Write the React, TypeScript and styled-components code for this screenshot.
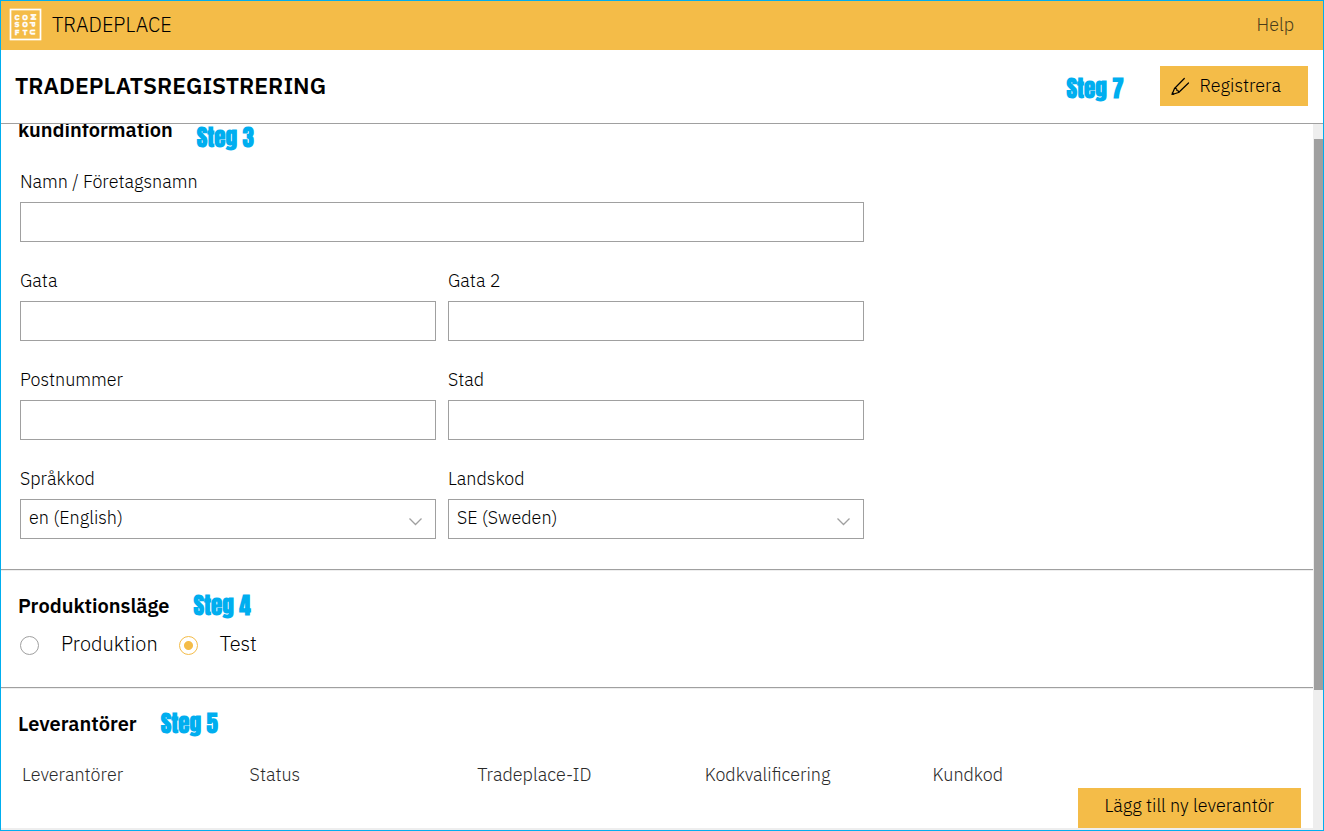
import React, { useId } from "react";
import styled, { createGlobalStyle } from "styled-components";

const amber = "#f4bc48";
const line = "#a0a0a0";
const cyan = "#00aeef";

const GlobalStyle = createGlobalStyle`
  *, *::before, *::after { box-sizing: border-box; }
  body {
    margin: 0;
    background: #fff;
    color: #000;
    font-family: "IBM Plex Sans", "Open Sans", sans-serif;
    font-size: 18px;
    font-weight: 300;
    line-height: 24px;
  }
  button, input, select { font: inherit; color: inherit; }
  h1, h2, fieldset { margin: 0; padding: 0; border: 0; }
`;

const Shell = styled.div`
  display: flex;
  flex-direction: column;
  height: 100vh;
  border: 1px solid ${cyan};
`;

const TopBar = styled.header`
  display: flex;
  align-items: center;
  justify-content: space-between;
  flex: none;
  height: 49px;
  padding: 0 29px 2px 8px;
  background: ${amber};
`;

const Brand = styled.div`
  display: flex;
  align-items: center;
  gap: 10px;
  font-size: 20px;
`;

const HelpLink = styled.a`
  color: #4a3c1c;
  text-decoration: none;
`;

const Step = styled.span`
  color: ${cyan};
  font-family: Impact, Anton, "Roboto Condensed", Roboto, sans-serif;
  font-size: 23px;
  font-weight: 700;
  line-height: 24px;
  white-space: nowrap;
`;

const TitleBar = styled.div`
  display: flex;
  align-items: center;
  flex: none;
  height: 74px;
  padding: 0 15px 1px 14px;
  border-bottom: 1px solid ${line};
  ${Step} { padding-top: 6px; }
`;

const PageTitle = styled.h1`
  flex: 1;
  padding-bottom: 2px;
  font-size: 23px;
  font-weight: 600;
`;

const AmberButton = styled.button`
  display: flex;
  align-items: center;
  justify-content: center;
  gap: 10px;
  height: 40px;
  padding: 0 27px 4px;
  border: 0;
  background: ${amber};
  cursor: pointer;
`;

const RegisterButton = styled(AmberButton)`
  margin-left: 36px;
  padding: 0 27px 1px 10px;
`;

const Body = styled.div`
  display: flex;
  flex: 1;
  min-height: 0;
  border-bottom: 2px solid #eee;
`;

const Content = styled.main`
  flex: 1;
  min-width: 0;
  overflow: hidden;
`;

const ScrollTrack = styled.div`
  flex: none;
  width: 10px;
  padding: 15px 0 0 1px;
  background: #eee;
`;

const ScrollThumb = styled.div`
  height: 80%;
  background: ${line};
`;

const Section = styled.section`
  padding: 24px 12px 0 17px;
  & + & {
    border-top: 1px solid ${line};
    box-shadow: inset 0 1px #eee;
  }
`;

const CustomerSection = styled(Section)`
  padding-top: 0;
  padding-bottom: 30px;
`;

const ModeSection = styled(Section)`
  padding-bottom: 31px;
`;

const HeadingRow = styled.div`
  display: flex;
  align-items: center;
  gap: 24px;
  min-height: 24px;
`;

/* Partly scrolled under the title bar. */
const CustomerHeading = styled(HeadingRow)`
  align-items: flex-start;
  height: 32px;
  margin-top: -6px;
  margin-bottom: 20px;
  ${Step} { align-self: flex-end; }
`;

const Heading = styled.h2`
  font-size: 20px;
  font-weight: 600;
  line-height: 24px;
`;

const Fields = styled.div`
  display: grid;
  grid-template-columns: 1fr 1fr;
  gap: 27px 12px;
  max-width: 846px;
  padding-left: 2px;
`;

const Field = styled.div<{ $wide?: boolean }>`
  display: flex;
  flex-direction: column;
  gap: 8px;
  grid-column: ${(p) => (p.$wide ? "1 / -1" : "auto")};
`;

const TextBox = styled.input`
  width: 100%;
  height: 40px;
  padding: 0 8px;
  border: 1px solid ${line};
  border-radius: 0;
  background: #fff;
`;

const SelectWrap = styled.div`
  display: grid;
  align-items: center;
  & > * { grid-area: 1 / 1; }
  & > svg { justify-self: end; margin: 4px 13px 0 0; pointer-events: none; }
`;

const SelectBox = styled.select`
  width: 100%;
  height: 40px;
  padding: 0 32px 2px 8px;
  border: 1px solid ${line};
  border-radius: 0;
  background: #fff;
  appearance: none;
`;

const Radios = styled.fieldset`
  display: flex;
  gap: 19px;
  margin-top: 14px;
`;

const RadioLabel = styled.label`
  display: flex;
  align-items: center;
  gap: 22px;
  padding-left: 2px;
  font-size: 20px;
`;

const Radio = styled.input`
  appearance: none;
  flex: none;
  width: 19px;
  height: 19px;
  margin: 2px 0 0;
  border: 1px solid ${line};
  border-radius: 50%;
  background: #fff;
  &:checked {
    border-color: ${amber};
    background: radial-gradient(circle, ${amber} 4px, #fff 5px);
  }
`;

const SupplierTable = styled.table`
  width: calc(100% - 145px);
  margin-top: 27px;
  margin-left: 4px;
  border-collapse: collapse;
  table-layout: fixed;
  color: #2a2a2a;
  th { padding: 0; font-weight: 300; text-align: left; }
`;

const Actions = styled.div`
  display: flex;
  justify-content: flex-end;
  padding-top: 1px;
`;

function Logo() {
  const cells: [string, number, number, number][] = [
    ["C", 8, 9, 0], ["O", 16, 9, 0], ["M", 24, 9, -90],
    ["S", 8, 16, 0], ["O", 16, 16, 0], ["P", 24, 16, 90],
    ["F", 8, 24, 0], ["T", 16, 24, 0], ["U", 24, 24, 90],
  ];
  return (
    <svg width="33" height="33" viewBox="0 0 33 33" aria-label="Compusoft">
      <rect x="1.500" y="1.500" width="30" height="30" fill="none" stroke="#fff" strokeWidth="1.700" />
      <g fill="#fff" stroke="#fff" strokeWidth="0.400" fontFamily="IBM Plex Sans, sans-serif" fontSize="8" fontWeight="700" textAnchor="middle">
        {cells.map(([letter, x, y, turn], i) => (
          <text key={i} transform={`translate(${x} ${y}) rotate(${turn})`} y="3">{letter}</text>
        ))}
      </g>
    </svg>
  );
}

function PencilIcon() {
  return (
    <svg width="20" height="20" viewBox="0 0 20 20" fill="none" stroke="#000" strokeWidth="1.200" strokeLinecap="round" strokeLinejoin="round">
      <path d="M14.300 2.500 4.500 12.500 2 18.500l6.600-2L18.500 7" />
      <path d="M4.500 12.500c2-.2 2.600.6 2.400 2 1.300 0 1.900.7 1.700 2" />
      <path d="M2.300 17l1.400 1.200" />
    </svg>
  );
}

function Chevron() {
  return (
    <svg width="15" height="9" viewBox="0 0 15 9" fill="none" stroke={line} strokeWidth="1.300">
      <path d="M1.500 1.500 7.500 7.500 13.500 1.500" />
    </svg>
  );
}

function TextField({ label, wide }: { label: string; wide?: boolean }) {
  const id = useId();
  return (
    <Field $wide={wide}>
      <label htmlFor={id}>{label}</label>
      <TextBox id={id} type="text" />
    </Field>
  );
}

function SelectField({ label, value }: { label: string; value: string }) {
  const id = useId();
  return (
    <Field>
      <label htmlFor={id}>{label}</label>
      <SelectWrap>
        <SelectBox id={id}><option>{value}</option></SelectBox>
        <Chevron />
      </SelectWrap>
    </Field>
  );
}

const columns = ["Leverantörer", "Status", "Tradeplace-ID", "Kodkvalificering", "Kundkod"];

export default function App() {
  return (
    <Shell>
      <GlobalStyle />
      <TopBar>
        <Brand><Logo />TRADEPLACE</Brand>
        <HelpLink href="#help">Help</HelpLink>
      </TopBar>
      <TitleBar>
        <PageTitle>TRADEPLATSREGISTRERING</PageTitle>
        <Step>Steg 7</Step>
        <RegisterButton type="button"><PencilIcon />Registrera</RegisterButton>
      </TitleBar>
      <Body>
        <Content>
          <CustomerSection>
            <CustomerHeading>
              <Heading>kundinformation</Heading>
              <Step>Steg 3</Step>
            </CustomerHeading>
            <Fields>
              <TextField label="Namn / Företagsnamn" wide />
              <TextField label="Gata" />
              <TextField label="Gata 2" />
              <TextField label="Postnummer" />
              <TextField label="Stad" />
              <SelectField label="Språkkod" value="en (English)" />
              <SelectField label="Landskod" value="SE (Sweden)" />
            </Fields>
          </CustomerSection>
          <ModeSection>
            <HeadingRow>
              <Heading>Produktionsläge</Heading>
              <Step>Steg 4</Step>
            </HeadingRow>
            <Radios aria-label="Produktionsläge">
              <RadioLabel><Radio type="radio" name="mode" />Produktion</RadioLabel>
              <RadioLabel><Radio type="radio" name="mode" defaultChecked />Test</RadioLabel>
            </Radios>
          </ModeSection>
          <Section>
            <HeadingRow>
              <Heading>Leverantörer</Heading>
              <Step>Steg 5</Step>
            </HeadingRow>
            <SupplierTable>
              <thead>
                <tr>{columns.map((c) => <th key={c} scope="col">{c}</th>)}</tr>
              </thead>
            </SupplierTable>
            <Actions>
              <AmberButton type="button">Lägg till ny leverantör</AmberButton>
            </Actions>
          </Section>
        </Content>
        <ScrollTrack><ScrollThumb /></ScrollTrack>
      </Body>
    </Shell>
  );
}
